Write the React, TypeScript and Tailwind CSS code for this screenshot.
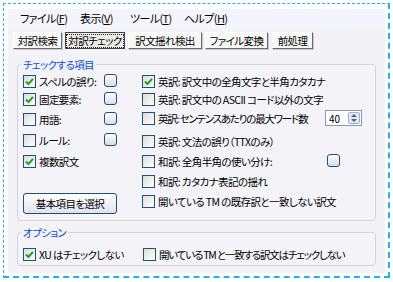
import React from 'react';

function Check({ checked = false }: { checked?: boolean }) {
  return (
    <span className="flex h-[13px] w-[13px] shrink-0 items-center justify-center border border-[#1c5180] bg-gradient-to-br from-[#dcdcd7] to-white">
      {checked && (
        <svg width="9" height="9" viewBox="0 0 9 9">
          <path d="M1 4.5 L3.5 7 L8 1.8" fill="none" stroke="#21a121" strokeWidth="2" />
        </svg>
      )}
    </span>
  );
}

function SmallButton() {
  return (
    <span className="block h-[13px] w-[13px] shrink-0 rounded-[3px] border border-[#1d4f7c] bg-gradient-to-b from-white to-[#dcdbe4]" />
  );
}

function Row({
  checked,
  label,
  className = '',
  tight = false,
}: {
  checked?: boolean;
  label: string;
  className?: string;
  tight?: boolean;
}) {
  return (
    <div className={`flex shrink-0 items-center gap-[3px] ${className}`}>
      <Check checked={checked} />
      <span className={`whitespace-nowrap ${tight ? 'tracking-[-1.2px]' : ''}`}>{label}</span>
    </div>
  );
}

function TabButton({ label, w, active = false }: { label: string; w: string; active?: boolean }) {
  return (
    <div
      className={`flex h-[17px] items-center justify-center whitespace-nowrap border ${w} ${
        active
          ? 'border-[#444] bg-[#ecebe6]'
          : 'border-t-white border-l-white border-r-[#6a6a6a] border-b-[#6a6a6a] bg-[#f7f7f5] shadow-[1px_1px_0_#c9c9c9]'
      }`}
    >
      <span className={`px-[1px] leading-[12px] ${active ? 'border border-dotted border-[#222]' : 'border border-transparent'}`}>
        {label}
      </span>
    </div>
  );
}

export default function App() {
  const leftItems = [
    { label: 'スペルの誤り:', checked: true, btn: true, h: 'h-[18px]' },
    { label: '固定要素:', checked: true, btn: true, h: 'h-[20px]' },
    { label: '用語:', checked: false, btn: true, h: 'h-[21px]' },
    { label: 'ルール:', checked: false, btn: true, h: 'h-[21px]' },
    { label: '複数訳文', checked: true, btn: false, h: 'h-[22px]' },
  ];

  return (
    <div className="h-[282px] w-[393px] bg-white pl-[3px] pt-[3px] font-['Noto_Sans_CJK_JP','Noto_Sans',sans-serif] text-[10.5px] tracking-[-0.6px] text-black [font-feature-settings:'palt']">
      <div className="h-[275px] w-[387px] border-b-2 border-l border-r-2 border-t border-dashed border-[#1eb4ea] pb-[3px] pl-[4px] pr-[2px] pt-[5px]">
        <div className="flex h-[264px] w-[377px] flex-col bg-[#f2f2f7]">
          {/* menu */}
          <div className="flex h-[19px] items-center bg-[#f4f4fd] pl-[12px] text-[11px]">
            <span className="w-[60px]">ファイル(<u>F</u>)</span>
            <span className="w-[50px]">表示(<u>V</u>)</span>
            <span className="w-[54px]">ツール(<u>T</u>)</span>
            <span>ヘルプ(<u>H</u>)</span>
          </div>

          {/* tabs */}
          <div className="mt-[4px] flex gap-[3px] pl-[5px]">
            <TabButton label="対訳検索" w="w-[49px]" />
            <TabButton label="対訳チェック" w="w-[60px]" active />
            <TabButton label="訳文揺れ検出" w="w-[74px]" />
            <TabButton label="ファイル変換" w="w-[63px]" />
            <TabButton label="前処理" w="w-[41px] ml-[1px]" />
          </div>

          {/* check items */}
          <div className="relative mx-[9px] mt-[15px] h-[157px] rounded-[4px] border border-[#d6d3dc] bg-[#f4f3f8]">
            <span className="absolute -top-[8px] left-[3px] bg-[#f2f2f7] px-[2px] text-[#0b4ed8]">チェックする項目</span>
            <div className="flex pt-[9px]">
              <div className="flex w-[124px] shrink-0 flex-col pl-[5px]">
                {leftItems.map((it) => (
                  <div key={it.label} className={`flex items-start ${it.h}`}>
                    <Row checked={it.checked} label={it.label} className="w-[81px]" />
                    {it.btn && <SmallButton />}
                  </div>
                ))}
                <div className="mt-[17px] flex h-[21px] w-[94px] items-center justify-center rounded-[3px] border border-[#1d4f7c] bg-gradient-to-b from-white to-[#e2e1ea]">
                  基本項目を選択
                </div>
              </div>
              <div className="flex flex-col">
                <div className="h-[18px]">
                  <Row checked label="英訳: 訳文中の全角文字と半角カタカナ" />
                </div>
                <div className="h-[19px]">
                  <Row label="英訳: 訳文中の ASCII コード以外の文字" />
                </div>
                <div className="flex h-[23px] items-start">
                  <Row label="英訳: センテンスあたりの最大ワード数" className="w-[183px]" tight />
                  <div className="-mt-[1px] flex h-[16px] w-[37px] items-center justify-between border border-[#7f9db9] bg-white pl-[3px] pr-[1px] tracking-normal">
                    <span className="text-[10px]">40</span>
                    <span className="flex h-[12px] w-[12px] items-center justify-center rounded-[2px] border border-[#9db0c9] bg-[#e6e8f0]">
                      <svg width="8" height="10" viewBox="0 0 8 10">
                        <path d="M1 4 L4 1 L7 4 Z M1 6 L4 9 L7 6 Z" fill="#4d6185" />
                      </svg>
                    </span>
                  </div>
                </div>
                <div className="h-[20px]">
                  <Row label="英訳: 文法の誤り（TTXのみ）" />
                </div>
                <div className="flex h-[20px] items-start">
                  <Row label="和訳: 全角半角の使い分け:" className="w-[185px]" />
                  <SmallButton />
                </div>
                <div className="h-[20px]">
                  <Row label="和訳: カタカナ表記の揺れ" />
                </div>
                <div className="h-[20px]">
                  <Row label="開いている TM の既存訳と一致しない訳文" />
                </div>
              </div>
            </div>
          </div>

          {/* options */}
          <div className="relative mx-[9px] mt-[11px] h-[34px] rounded-[4px] border border-[#d6d3dc] bg-[#f4f3f8]">
            <span className="absolute -top-[8px] left-[3px] bg-[#f2f2f7] px-[2px] text-[#0b4ed8]">オプション</span>
            <div className="flex items-start pl-[5px] pt-[14px]">
              <Row checked label="XU はチェックしない" className="w-[120px]" />
              <Row label="開いている TM と一致する訳文はチェックしない" tight />
            </div>
          </div>
        </div>
      </div>
    </div>
  );
}
